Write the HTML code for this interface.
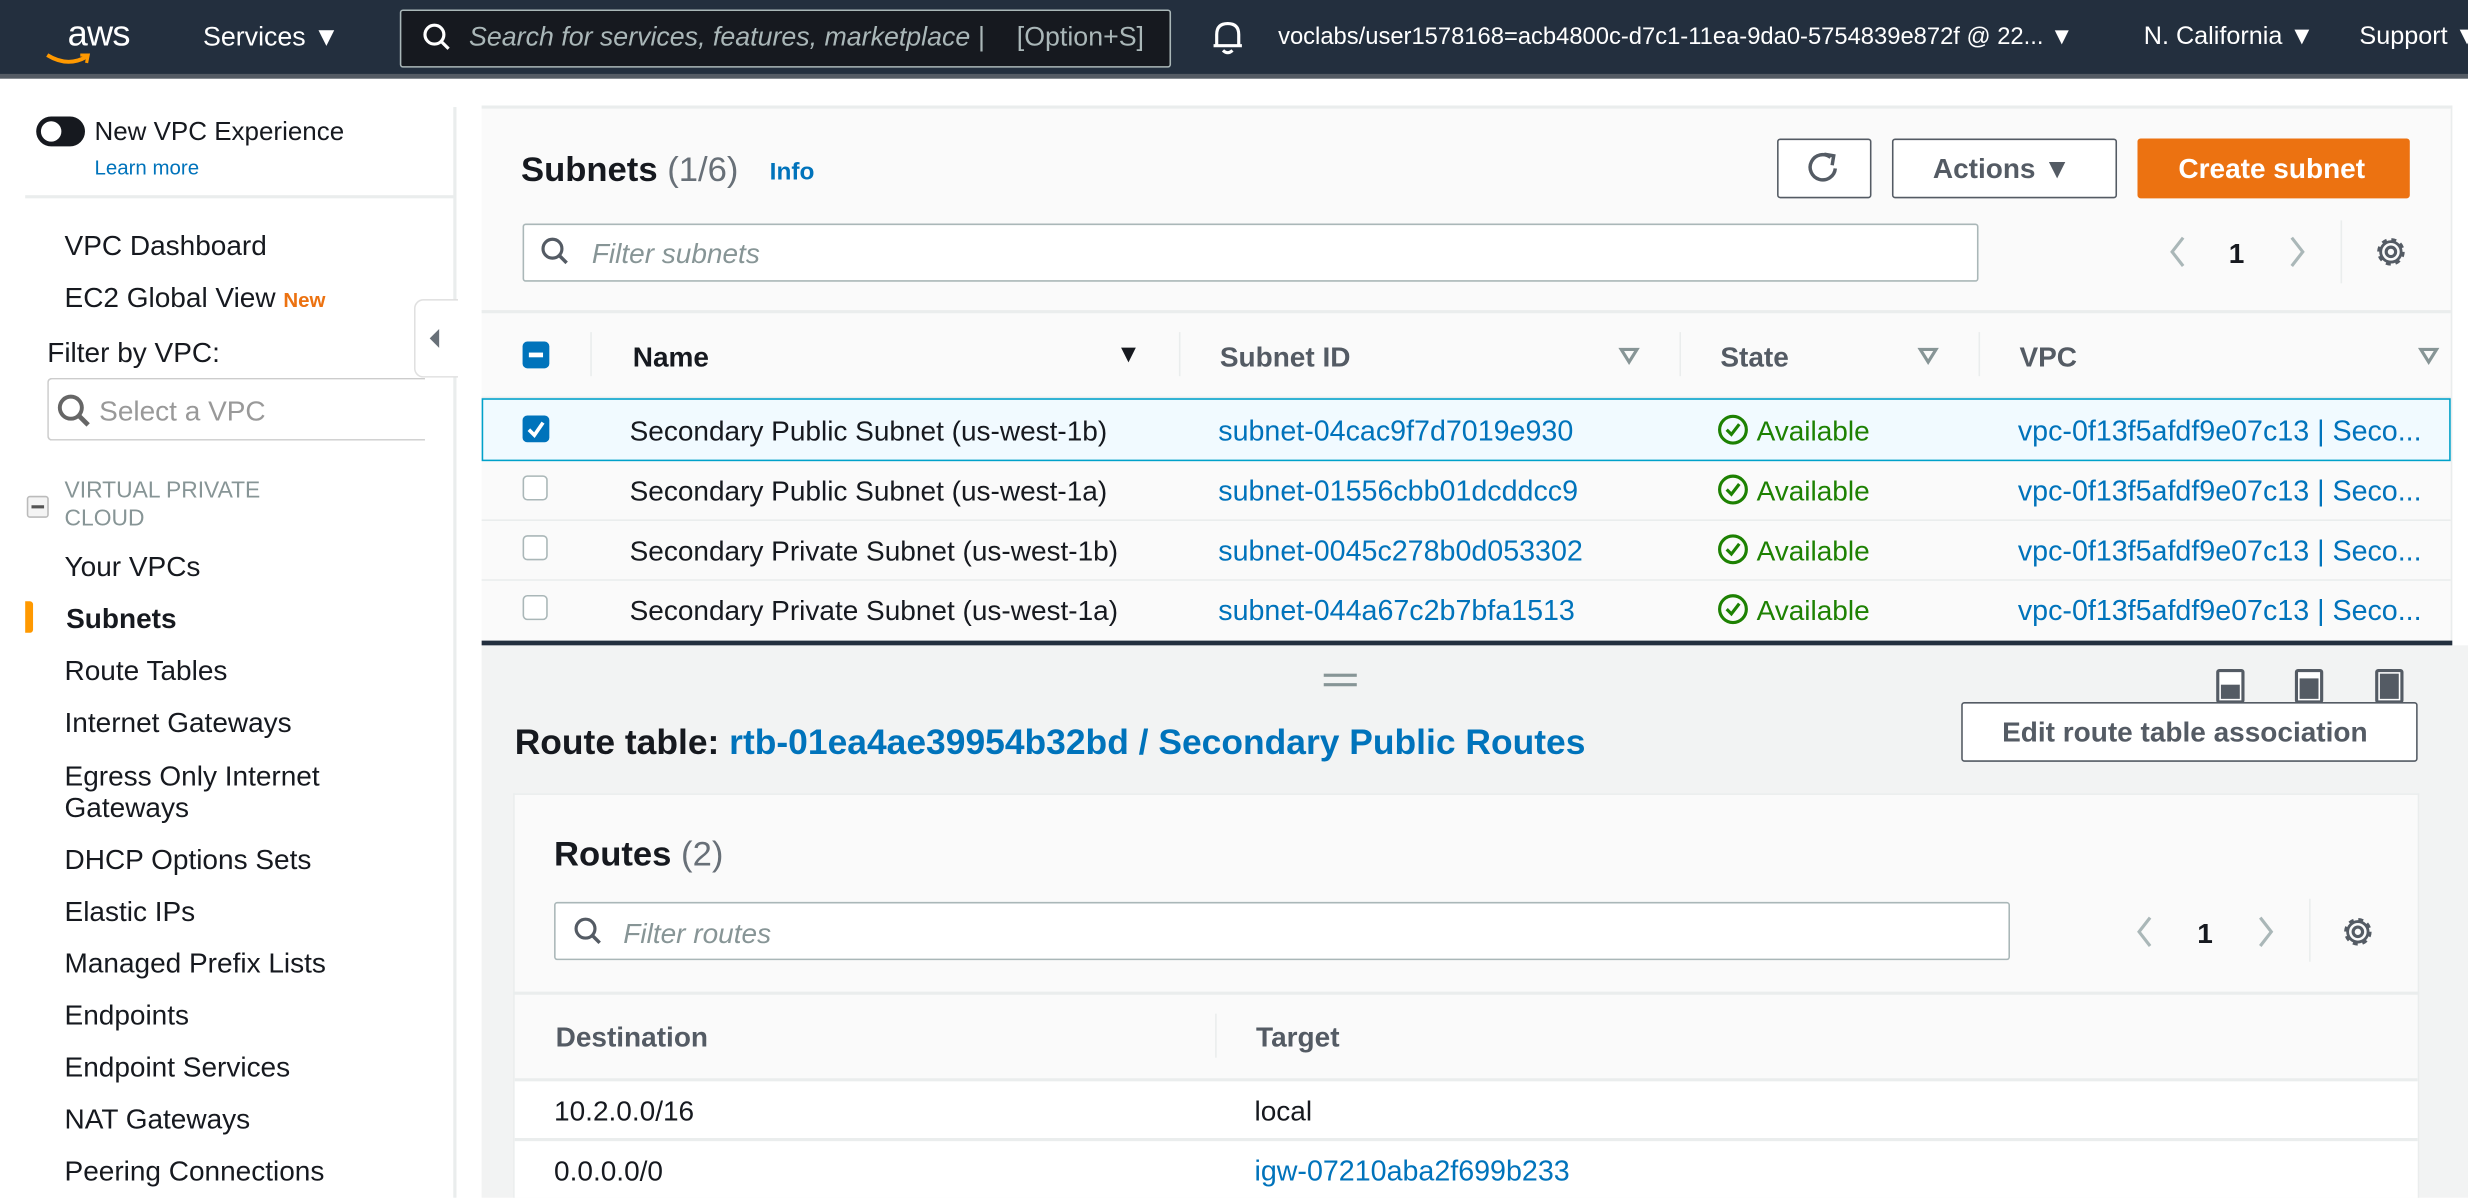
<!DOCTYPE html>
<html><head><meta charset="utf-8"><style>
html,body{margin:0;padding:0;width:2468px;height:1198px;overflow:hidden;background:#fff}
#w{position:absolute;left:0;top:0;width:1568px;height:761px;transform:scale(1.574);transform-origin:0 0;font-family:"Liberation Sans",Arial,sans-serif;color:#16191f;overflow:hidden}
.a{position:absolute;white-space:nowrap;line-height:24px;height:24px}
.b{font-weight:bold}
.blue{color:#0073bb}
.green{color:#1d8102}
.gray{color:#545b64}
.box{position:absolute;box-sizing:border-box}
.s17{font-size:17.8px}
.s16{font-size:16.5px}
.nav{font-size:16px;color:#fff}
.cb{position:absolute;width:16px;height:16px;border:1.5px solid #aab7b8;border-radius:3px;box-sizing:border-box;background:#fff}
</style></head><body><div id="w">
<!-- top nav -->
<div class="box" style="left:0;top:0;width:1568px;height:47px;background:#232f3e"></div>
<div class="box" style="left:0;top:47px;width:1568px;height:3px;background:#545b64"></div>
<div class="a nav" style="left:43px;top:9px;font-size:23px;letter-spacing:-0.5px">aws</div>
<svg style="position:absolute;left:28px;top:33px" width="32" height="12"><path d="M2 2 Q15 10 27 3" stroke="#ff9900" stroke-width="2.5" fill="none"/><path d="M23 2 L28 2 L27 7" stroke="#ff9900" stroke-width="2" fill="none"/></svg>
<div class="a nav" style="left:129px;top:12px;font-size:17px">Services &#9660;</div>
<div class="box" style="left:254px;top:6px;width:490px;height:37px;background:#16191f;border:1.5px solid #aab7b8;border-radius:2px"></div>
<svg style="position:absolute;left:268px;top:14px" width="20" height="20"><circle cx="8" cy="8" r="6" stroke="#fff" stroke-width="2" fill="none"/><path d="M12.5 12.5 L17 17" stroke="#fff" stroke-width="2"/></svg>
<div class="a" style="left:298px;top:12px;font-size:17px;color:#aab7b8;font-style:italic">Search for services, features, marketplace |</div>
<div class="a" style="left:646px;top:12px;font-size:17px;color:#aab7b8">[Option+S]</div>
<svg style="position:absolute;left:769px;top:12px" width="22" height="24"><path d="M4 17 L4 10 Q4 3 11 3 Q18 3 18 10 L18 17 Z M2 17 L20 17 M8 20 Q11 23 14 20" stroke="#fff" stroke-width="2" fill="none"/></svg>
<div class="a nav" style="left:812px;top:12px;font-size:15.1px">voclabs/user1578168=acb4800c-d7c1-11ea-9da0-5754839e872f @ 22... &#9660;</div>
<div class="a nav" style="left:1362px;top:12px">N. California &#9660;</div>
<div class="a nav" style="left:1499px;top:12px">Support &#9660;</div>

<!-- sidebar -->
<div class="box" style="left:288px;top:68px;width:2px;height:693px;background:#eaeded"></div>
<div class="box" style="left:23px;top:74px;width:31px;height:19px;border-radius:10px;background:#16191f"></div>
<div class="box" style="left:26px;top:77px;width:13px;height:13px;border-radius:7px;background:#fff"></div>
<div class="a s16" style="left:60px;top:72px">New VPC Experience</div>
<div class="a blue" style="left:60px;top:95px;font-size:13px">Learn more</div>
<div class="box" style="left:16px;top:124px;width:273px;height:2px;background:#eaeded"></div>
<div class="a s17" style="left:41px;top:144px">VPC Dashboard</div>
<div class="a s17" style="left:41px;top:177px">EC2 Global View <span style="color:#ec7211;font-size:13px;font-weight:bold">New</span></div>
<div class="a s17" style="left:30px;top:212px">Filter by VPC:</div>
<div class="box" style="left:30px;top:240px;width:240px;height:40px;border:1.5px solid #ccc;border-right:none;border-radius:3px 0 0 3px"></div>
<svg style="position:absolute;left:35px;top:249px" width="24" height="24"><circle cx="10" cy="10" r="7" stroke="#666" stroke-width="2.5" fill="none"/><path d="M15 15 L21 21" stroke="#666" stroke-width="3"/></svg>
<div class="a s17" style="left:63px;top:249px;color:#999">Select a VPC</div>
<div class="box" style="left:263px;top:190px;width:28px;height:50px;background:#fff;border:1px solid #e0e0e0;border-right:none;border-radius:6px 0 0 6px"></div>
<svg style="position:absolute;left:271px;top:207px" width="10" height="16"><path d="M8 2 L2 8 L8 14 Z" fill="#687078"/></svg>
<div class="box" style="left:17px;top:315px;width:14px;height:14px;border:1px solid #bbb;border-radius:2px;background:#f4f4f4"></div>
<div class="box" style="left:20px;top:321px;width:8px;height:2px;background:#555"></div>
<div class="a" style="left:41px;top:300px;font-size:14.5px;color:#879596">VIRTUAL PRIVATE</div>
<div class="a" style="left:41px;top:318px;font-size:14.5px;color:#879596">CLOUD</div>
<div class="a s17" style="left:41px;top:348px">Your VPCs</div>
<div class="box" style="left:16px;top:382px;width:5px;height:20px;background:#ff9900;border-radius:0 2px 2px 0"></div>
<div class="a s17 b" style="left:42px;top:381px">Subnets</div>
<div class="a s17" style="left:41px;top:414px">Route Tables</div>
<div class="a s17" style="left:41px;top:447px">Internet Gateways</div>
<div class="a s17" style="left:41px;top:481px">Egress Only Internet</div>
<div class="a s17" style="left:41px;top:501px">Gateways</div>
<div class="a s17" style="left:41px;top:534px">DHCP Options Sets</div>
<div class="a s17" style="left:41px;top:567px">Elastic IPs</div>
<div class="a s17" style="left:41px;top:600px">Managed Prefix Lists</div>
<div class="a s17" style="left:41px;top:633px">Endpoints</div>
<div class="a s17" style="left:41px;top:666px">Endpoint Services</div>
<div class="a s17" style="left:41px;top:699px">NAT Gateways</div>
<div class="a s17" style="left:41px;top:732px">Peering Connections</div>

<!-- main top panel -->
<div class="box" style="left:306px;top:67px;width:1252px;height:343px;background:#fafafa;border-top:2px solid #eaeded;border-right:1px solid #eaeded"></div>
<div class="a b" style="left:331px;top:96px;font-size:22px">Subnets <span style="font-weight:normal;color:#687078">(1/6)</span></div>
<div class="a b blue" style="left:489px;top:98px;font-size:15.5px">Info</div>
<div class="box" style="left:1129px;top:88px;width:60px;height:38px;border:1.5px solid #545b64;border-radius:2px;background:#fff"></div>
<svg style="position:absolute;left:1147px;top:96px" width="24" height="22"><path d="M16 4 A8 8 0 1 0 19 11" stroke="#545b64" stroke-width="2.2" fill="none"/><path d="M12 2 L18 3 L17 9" stroke="#545b64" stroke-width="2.2" fill="none"/></svg>
<div class="box" style="left:1202px;top:88px;width:143px;height:38px;border:1.5px solid #545b64;border-radius:2px;background:#fff"></div>
<div class="a b s17 gray" style="left:1228px;top:95px">Actions &#9660;</div>
<div class="box" style="left:1358px;top:88px;width:173px;height:38px;background:#ec7211;border-radius:2px"></div>
<div class="a b s17" style="left:1384px;top:95px;color:#fff">Create subnet</div>
<div class="box" style="left:332px;top:142px;width:925px;height:37px;border:1.5px solid #aab7b8;border-radius:2px;background:#fff"></div>
<svg style="position:absolute;left:343px;top:150px" width="22" height="22"><circle cx="8" cy="8" r="6" stroke="#545b64" stroke-width="2" fill="none"/><path d="M12.5 12.5 L17 17" stroke="#545b64" stroke-width="2.2"/></svg>
<div class="a s17" style="left:376px;top:149px;color:#879596;font-style:italic">Filter subnets</div>
<svg style="position:absolute;left:1376px;top:148px" width="16" height="24"><path d="M11 3 L4 12 L11 21" stroke="#aab7b8" stroke-width="2" fill="none"/></svg>
<div class="a s17 b" style="left:1416px;top:149px">1</div>
<svg style="position:absolute;left:1452px;top:148px" width="16" height="24"><path d="M4 3 L11 12 L4 21" stroke="#aab7b8" stroke-width="2" fill="none"/></svg>
<div class="box" style="left:1487px;top:140px;width:1px;height:40px;background:#eaeded"></div>
<svg style="position:absolute;left:1507px;top:148px" width="24" height="24"><circle cx="12" cy="12" r="3" stroke="#545b64" stroke-width="2" fill="none"/><circle cx="12" cy="12" r="7.5" stroke="#545b64" stroke-width="2.5" fill="none" stroke-dasharray="3 2.9"/><circle cx="12" cy="12" r="6.5" stroke="#545b64" stroke-width="1.8" fill="none"/></svg>
<div class="box" style="left:306px;top:197px;width:1251px;height:2px;background:#eaeded"></div>
<!-- header -->
<div class="box" style="left:332px;top:217px;width:17px;height:17px;background:#0073bb;border-radius:3px"></div>
<div class="box" style="left:336px;top:224px;width:9px;height:3px;background:#fff"></div>
<div class="box" style="left:375px;top:211px;width:1px;height:28px;background:#eaeded"></div>
<div class="box" style="left:749px;top:211px;width:1px;height:28px;background:#eaeded"></div>
<div class="box" style="left:1067px;top:211px;width:1px;height:28px;background:#eaeded"></div>
<div class="box" style="left:1257px;top:211px;width:1px;height:28px;background:#eaeded"></div>
<div class="a b s17" style="left:402px;top:215px">Name</div>
<div class="a" style="left:709px;top:214px;font-size:16px">&#9660;</div>
<div class="a b s17 gray" style="left:775px;top:215px">Subnet ID</div>
<div class="a b s17 gray" style="left:1093px;top:215px">State</div>
<div class="a b s17 gray" style="left:1283px;top:215px">VPC</div>
<svg style="position:absolute;left:1028px;top:220px" width="14" height="12"><path d="M2 2 L12 2 L7 10 Z" stroke="#879596" stroke-width="2" fill="none"/></svg>
<svg style="position:absolute;left:1218px;top:220px" width="14" height="12"><path d="M2 2 L12 2 L7 10 Z" stroke="#879596" stroke-width="2" fill="none"/></svg>
<svg style="position:absolute;left:1536px;top:220px" width="14" height="12"><path d="M2 2 L12 2 L7 10 Z" stroke="#879596" stroke-width="2" fill="none"/></svg>
<div class="box" style="left:306px;top:252px;width:1251px;height:2px;background:#eaeded"></div>
<!-- rows -->
<div class="box" style="left:306px;top:253px;width:1251px;height:40px;background:#f1faff;border:1.5px solid #00a1c9"></div>
<div class="box" style="left:306px;top:330px;width:1251px;height:1px;background:#eaeded"></div>
<div class="box" style="left:306px;top:368px;width:1251px;height:1px;background:#eaeded"></div>
<div class="box" style="left:332px;top:264px;width:17px;height:17px;background:#0073bb;border-radius:3px"></div>
<svg style="position:absolute;left:332px;top:264px" width="17" height="17"><path d="M4 9 L7.5 12.5 L13 4.5" stroke="#fff" stroke-width="2.3" fill="none"/></svg>
<div class="cb" style="left:332px;top:302px"></div>
<div class="cb" style="left:332px;top:340px"></div>
<div class="cb" style="left:332px;top:378px"></div>
<div class="a s17" style="left:400px;top:262px">Secondary Public Subnet (us-west-1b)</div>
<div class="a s17" style="left:400px;top:300px">Secondary Public Subnet (us-west-1a)</div>
<div class="a s17" style="left:400px;top:338px">Secondary Private Subnet (us-west-1b)</div>
<div class="a s17" style="left:400px;top:376px">Secondary Private Subnet (us-west-1a)</div>
<div class="a blue" style="left:774px;top:262px;font-size:18.2px">subnet-04cac9f7d7019e930</div>
<div class="a blue" style="left:774px;top:300px;font-size:18.2px">subnet-01556cbb01dcddcc9</div>
<div class="a blue" style="left:774px;top:338px;font-size:18.2px">subnet-0045c278b0d053302</div>
<div class="a blue" style="left:774px;top:376px;font-size:18.2px">subnet-044a67c2b7bfa1513</div>
<svg style="position:absolute;left:1091px;top:263px" width="22" height="100"><g stroke="#1d8102" stroke-width="2" fill="none"><circle cx="10" cy="10" r="8.5"/><path d="M6 10 L9 13 L14 6.5"/><circle cx="10" cy="48" r="8.5"/><path d="M6 48 L9 51 L14 44.5"/><circle cx="10" cy="86" r="8.5"/><path d="M6 86 L9 89 L14 82.5"/></g></svg>
<svg style="position:absolute;left:1091px;top:377px" width="22" height="22"><g stroke="#1d8102" stroke-width="2" fill="none"><circle cx="10" cy="10" r="8.5"/><path d="M6 10 L9 13 L14 6.5"/></g></svg>
<div class="a s17 green" style="left:1116px;top:262px">Available</div>
<div class="a s17 green" style="left:1116px;top:300px">Available</div>
<div class="a s17 green" style="left:1116px;top:338px">Available</div>
<div class="a s17 green" style="left:1116px;top:376px">Available</div>
<div class="a blue" style="left:1282px;top:262px;font-size:18.2px">vpc-0f13f5afdf9e07c13 | Seco...</div>
<div class="a blue" style="left:1282px;top:300px;font-size:18.2px">vpc-0f13f5afdf9e07c13 | Seco...</div>
<div class="a blue" style="left:1282px;top:338px;font-size:18.2px">vpc-0f13f5afdf9e07c13 | Seco...</div>
<div class="a blue" style="left:1282px;top:376px;font-size:18.2px">vpc-0f13f5afdf9e07c13 | Seco...</div>

<!-- split panel -->
<div class="box" style="left:306px;top:410px;width:1262px;height:351px;background:#f2f3f3"></div>
<div class="box" style="left:306px;top:407px;width:1252px;height:3px;background:#232f3e"></div>
<div class="box" style="left:841px;top:428px;width:21px;height:2px;background:#879596"></div>
<div class="box" style="left:841px;top:434px;width:21px;height:2px;background:#879596"></div>
<div class="box" style="left:1408px;top:425px;width:18px;height:22px;border:2px solid #545b64;border-radius:2px;background:#fff"></div>
<div class="box" style="left:1411px;top:435px;width:12px;height:9px;background:#545b64"></div>
<div class="box" style="left:1458px;top:425px;width:18px;height:22px;border:2px solid #545b64;border-radius:2px;background:#fff"></div>
<div class="box" style="left:1461px;top:431px;width:12px;height:13px;background:#545b64"></div>
<div class="box" style="left:1509px;top:425px;width:18px;height:22px;border:2px solid #545b64;border-radius:2px;background:#fff"></div>
<div class="box" style="left:1512px;top:428px;width:12px;height:16px;background:#545b64"></div>
<div class="a b" style="left:327px;top:460px;font-size:22.5px">Route table: <span class="blue">rtb-01ea4ae39954b32bd / Secondary Public Routes</span></div>
<div class="box" style="left:1246px;top:446px;width:290px;height:38px;border:1.5px solid #545b64;border-radius:2px;background:#fff"></div>
<div class="a b s17 gray" style="left:1272px;top:453px">Edit route table association</div>
<div class="box" style="left:326px;top:504px;width:1211px;height:257px;background:#fafafa;border:1px solid #eaeded;border-bottom:none"></div>
<div class="a b" style="left:352px;top:531px;font-size:22px">Routes <span style="font-weight:normal;color:#687078">(2)</span></div>
<div class="box" style="left:352px;top:573px;width:925px;height:37px;border:1.5px solid #aab7b8;border-radius:2px;background:#fff"></div>
<svg style="position:absolute;left:364px;top:582px" width="22" height="22"><circle cx="8" cy="8" r="6" stroke="#545b64" stroke-width="2" fill="none"/><path d="M12.5 12.5 L17 17" stroke="#545b64" stroke-width="2.2"/></svg>
<div class="a s17" style="left:396px;top:581px;color:#879596;font-style:italic">Filter routes</div>
<svg style="position:absolute;left:1355px;top:580px" width="16" height="24"><path d="M11 3 L4 12 L11 21" stroke="#aab7b8" stroke-width="2" fill="none"/></svg>
<div class="a s17 b" style="left:1396px;top:581px">1</div>
<svg style="position:absolute;left:1432px;top:580px" width="16" height="24"><path d="M4 3 L11 12 L4 21" stroke="#aab7b8" stroke-width="2" fill="none"/></svg>
<div class="box" style="left:1467px;top:571px;width:1px;height:40px;background:#eaeded"></div>
<svg style="position:absolute;left:1486px;top:580px" width="24" height="24"><circle cx="12" cy="12" r="3" stroke="#545b64" stroke-width="2" fill="none"/><circle cx="12" cy="12" r="7.5" stroke="#545b64" stroke-width="2.5" fill="none" stroke-dasharray="3 2.9"/><circle cx="12" cy="12" r="6.5" stroke="#545b64" stroke-width="1.8" fill="none"/></svg>
<div class="box" style="left:326px;top:630px;width:1211px;height:2px;background:#eaeded"></div>
<div class="box" style="left:772px;top:644px;width:1px;height:28px;background:#eaeded"></div>
<div class="a b s17 gray" style="left:353px;top:647px">Destination</div>
<div class="a b s17 gray" style="left:798px;top:647px">Target</div>
<div class="box" style="left:327px;top:685px;width:1209px;height:76px;background:#fff;border-top:2px solid #eaeded"></div>
<div class="box" style="left:327px;top:723px;width:1209px;height:2px;background:#eaeded"></div>
<div class="a s17" style="left:352px;top:694px">10.2.0.0/16</div>
<div class="a s17" style="left:797px;top:694px">local</div>
<div class="a s17" style="left:352px;top:732px">0.0.0.0/0</div>
<div class="a blue" style="left:797px;top:732px;font-size:18.2px">igw-07210aba2f699b233</div>
</div></body></html>
